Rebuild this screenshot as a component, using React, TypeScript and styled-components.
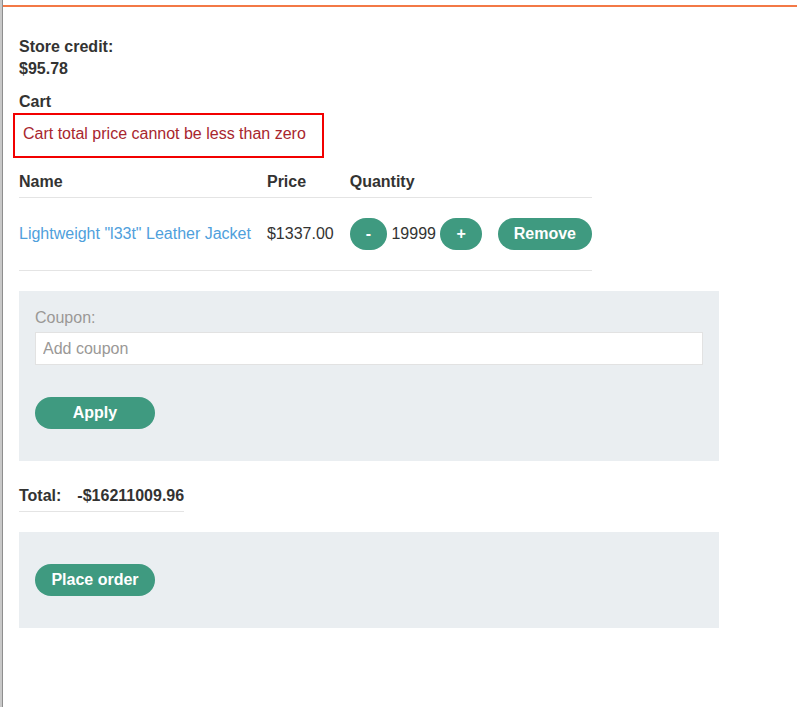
import React from "react";
import styled, { createGlobalStyle } from "styled-components";

const GlobalStyle = createGlobalStyle`
  html, body {
    margin: 0;
    padding: 0;
    background: #ffffff;
  }
  body {
    font-family: "Liberation Sans", Arial, sans-serif;
    font-size: 16px;
    line-height: 1.4;
    color: #333332;
  }
`;

const Page = styled.div`
  min-height: 100vh;
  box-sizing: border-box;
  padding-top: 5px;
  border-left: 2px solid #c8c8c8;
  box-shadow: inset 1px 0 #8e8e8e;
  background: #ffffff;
`;

const TopRule = styled.div`
  height: 2px;
  margin-left: 1px;
  background: #f37946;
`;

const Main = styled.main`
  padding: 29px 16px 40px 17px;
  display: flex;
  flex-direction: column;
  align-items: flex-start;
`;

const Credit = styled.div`
  font-weight: bold;
`;

const Heading = styled.div`
  font-weight: bold;
  margin-top: 10px;
`;

const ErrorBox = styled.p`
  margin: 0 0 0 -6px;
  border: 2px solid #f20000;
  padding: 8px 16px 10px 8px;
  color: #a8262e;
`;

const Table = styled.table<{ $top: number }>`
  border-collapse: collapse;
  margin-top: ${(p) => p.$top}px;
`;

const HeadCell = styled.th`
  text-align: left;
  font-weight: bold;
  padding: 4px 0;
  border-bottom: 1px solid #e4e4e4;
  & + & {
    padding-left: 16px;
  }
`;

const Cell = styled.td<{ $top: number; $bottom: number; $bold?: boolean }>`
  padding: ${(p) => p.$top}px 0 ${(p) => p.$bottom}px;
  vertical-align: middle;
  white-space: nowrap;
  font-weight: ${(p) => (p.$bold ? "bold" : "normal")};
  & + & {
    padding-left: 16px;
  }
`;

const Row = styled.tr`
  border-bottom: 1px solid #e4e4e4;
`;

const ItemLink = styled.a`
  color: #4fa0dc;
  text-decoration: none;
`;

const Button = styled.button<{ $wide?: boolean }>`
  font: inherit;
  font-weight: bold;
  line-height: 22px;
  color: #ffffff;
  background: #3f9a80;
  border: none;
  border-radius: 18px;
  padding: 5px 16px;
  min-width: ${(p) => (p.$wide ? "120px" : "0")};
  cursor: pointer;
`;

const Panel = styled.form`
  box-sizing: border-box;
  width: 700px;
  margin-top: 20px;
  padding: 16px;
  background: #eaeef1;
  display: flex;
  flex-direction: column;
  align-items: flex-start;
`;

const Label = styled.label`
  color: #9a9896;
`;

const Input = styled.input`
  box-sizing: border-box;
  width: 100%;
  height: 33px;
  margin-top: 3px;
  padding: 0 7px;
  border: 1px solid #e2e2e2;
  background: #ffffff;
  font: inherit;
  color: #333332;
  outline: none;
  &::placeholder {
    color: #9a9896;
  }
`;

const ButtonRow = styled.div<{ $top: number }>`
  padding: ${(p) => p.$top}px 0 16px;
`;

export default function App() {
  return (
    <>
      <GlobalStyle />
      <Page>
        <TopRule />
        <Main>
          <Credit>
            <div>Store credit:</div>
            <div>$95.78</div>
          </Credit>
          <Heading>Cart</Heading>
          <ErrorBox>Cart total price cannot be less than zero</ErrorBox>

          <Table $top={9}>
            <thead>
              <tr>
                <HeadCell>Name</HeadCell>
                <HeadCell>Price</HeadCell>
                <HeadCell>Quantity</HeadCell>
                <HeadCell></HeadCell>
              </tr>
            </thead>
            <tbody>
              <Row>
                <Cell $top={20} $bottom={20}>
                  <ItemLink href="#">Lightweight "l33t" Leather Jacket</ItemLink>
                </Cell>
                <Cell $top={20} $bottom={20}>$1337.00</Cell>
                <Cell $top={20} $bottom={20}>
                  <Button type="button">-</Button> 19999 <Button type="button">+</Button>
                </Cell>
                <Cell $top={20} $bottom={20}>
                  <Button type="button">Remove</Button>
                </Cell>
              </Row>
            </tbody>
          </Table>

          <Panel onSubmit={(e) => e.preventDefault()}>
            <Label htmlFor="coupon">Coupon:</Label>
            <Input id="coupon" placeholder="Add coupon" />
            <ButtonRow $top={32}>
              <Button $wide type="submit">Apply</Button>
            </ButtonRow>
          </Panel>

          <Table $top={20}>
            <tbody>
              <Row>
                <Cell $top={4} $bottom={3} $bold>Total:</Cell>
                <Cell $top={4} $bottom={3} $bold>-$16211009.96</Cell>
              </Row>
            </tbody>
          </Table>

          <Panel onSubmit={(e) => e.preventDefault()}>
            <ButtonRow $top={16}>
              <Button $wide type="submit">Place order</Button>
            </ButtonRow>
          </Panel>
        </Main>
      </Page>
    </>
  );
}
